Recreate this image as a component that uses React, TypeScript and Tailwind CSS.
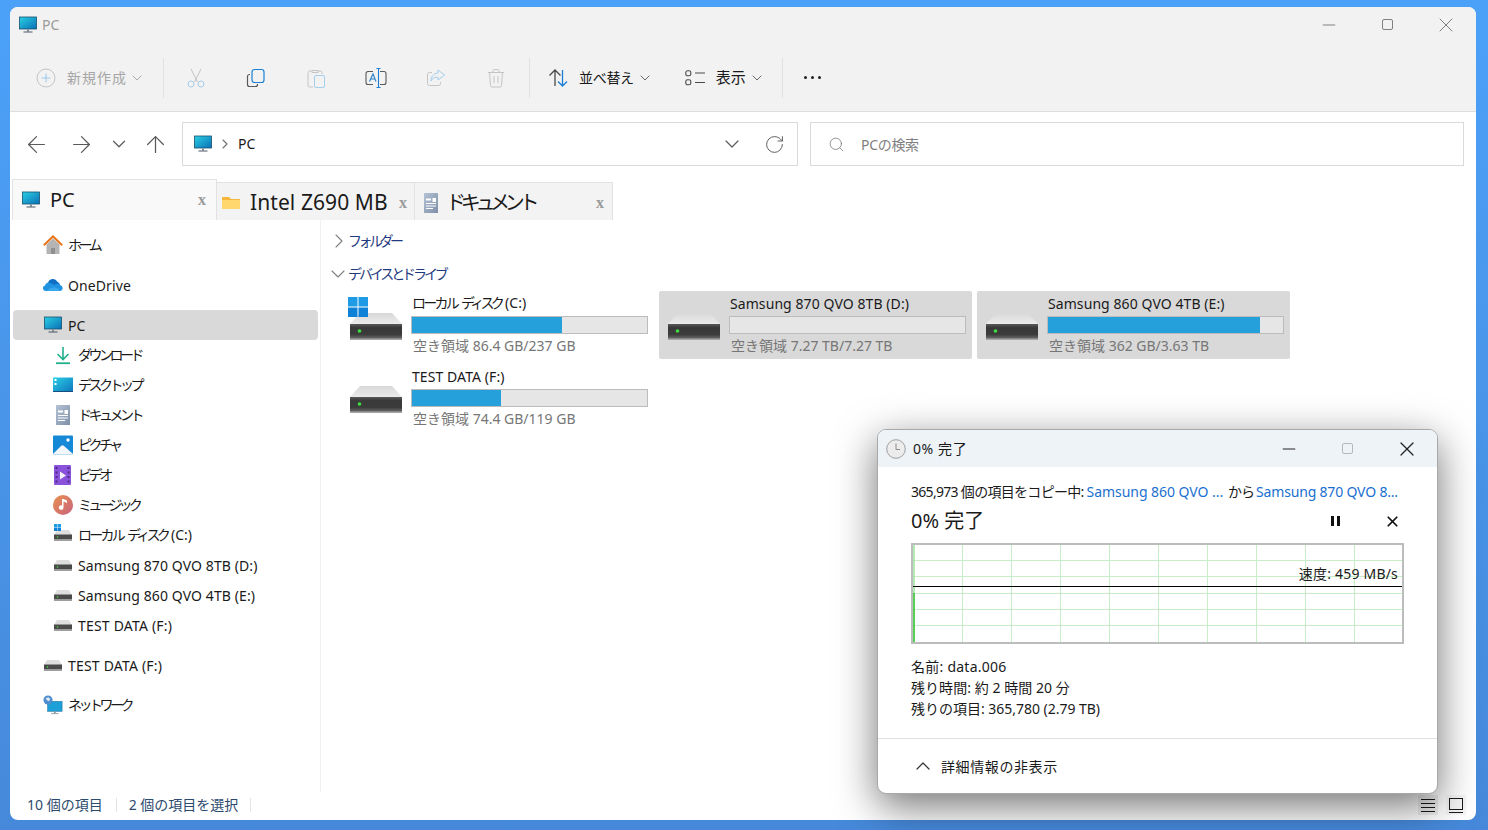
import React, { useId } from "react";
import { ArrowLeft, ArrowRight, ArrowUp, ChevronDown, ChevronRight, ChevronUp, RotateCw, Search, X, Minus } from "lucide-react";

function Monitor({ s = 20 }: { s?: number }) {
  const id = useId();
  return (
    <svg width={s} height={s} viewBox="0 0 20 20" className="shrink-0">
      <defs>
        <linearGradient id={id} x1="0" y1="0" x2="1" y2="1">
          <stop offset="0" stopColor="#2ad0e4" />
          <stop offset="1" stopColor="#0a6fb5" />
        </linearGradient>
      </defs>
      <rect x="1.5" y="2" width="17" height="12" fill={`url(#${id})`} stroke="#17506f" strokeWidth="0.8" />
      <rect x="9" y="14.5" width="2" height="2" fill="#7c8a94" />
      <rect x="5.5" y="16.5" width="9" height="1" fill="#4a5660" />
    </svg>
  );
}

function Hdd({ large = false }: { large?: boolean }) {
  const id = useId();
  const top = useId();
  if (large) {
    return (
      <svg width="52" height="27" viewBox="0 0 52 27" className="block">
        <defs>
          <linearGradient id={id} x1="0" y1="0" x2="0" y2="1">
            <stop offset="0" stopColor="#5a5a5a" />
            <stop offset="0.25" stopColor="#383838" />
            <stop offset="0.7" stopColor="#3c3c3c" />
            <stop offset="1" stopColor="#6e6e6e" />
          </linearGradient>
          <linearGradient id={top} x1="0" y1="0" x2="0" y2="1">
            <stop offset="0" stopColor="#d8d8d8" />
            <stop offset="1" stopColor="#ececec" />
          </linearGradient>
        </defs>
        <path d="M10 0h32l10 11H0z" fill={`url(#${top})`} />
        <rect x="0" y="11" width="52" height="15" fill={`url(#${id})`} />
        <rect x="0" y="25.500" width="52" height="1.500" fill="#a5a5a5" />
        <circle cx="9.500" cy="18" r="1.800" fill="#3fe03f" />
      </svg>
    );
  }
  return (
    <svg width="18" height="11" viewBox="0 0 18 11" className="block">
      <path d="M3 0h12l3 5H0z" fill="#dedede" />
      <rect y="4.5" width="18" height="6" fill="#4a4a4a" />
      <rect y="9" width="18" height="1.5" fill="#9a9a9a" />
      <circle cx="3.5" cy="7" r="0.8" fill="#3fe03f" />
    </svg>
  );
}

function WinLogo({ s = 20 }: { s?: number }) {
  return (
    <svg width={s} height={s} viewBox="0 0 20 20" className="block">
      <rect x="0" y="0" width="9.5" height="9.5" fill="#1f9be6" />
      <rect x="10.5" y="0" width="9.5" height="9.5" fill="#1f9be6" />
      <rect x="0" y="10.5" width="9.5" height="9.5" fill="#0f82d8" />
      <rect x="10.5" y="10.5" width="9.5" height="9.5" fill="#0f82d8" />
    </svg>
  );
}

function DriveSmall({ win = false }: { win?: boolean }) {
  return (
    <span className="relative block w-[18px] h-[11px]">
      <Hdd />
      {win && (
        <span className="absolute left-0 top-[-6px]">
          <WinLogo s={7} />
        </span>
      )}
    </span>
  );
}

const HomeIcon = () => (
  <svg width="20" height="20" viewBox="0 0 20 20">
    <path d="M3.5 9.5 10 3.5l6.5 6V19h-13z" fill="#b4b4b4" />
    <path d="M8 13h4v6H8z" fill="#8f8f8f" />
    <path d="M0.8 10.3 10 1.5l9.2 8.8" fill="none" stroke="#e8751a" strokeWidth="2" />
  </svg>
);
const CloudIcon = () => (
  <svg width="20" height="20" viewBox="0 0 20 20">
    <path d="M5 8a5 5 0 0 1 9.4-1.2A3.8 3.8 0 0 1 17 10H6z" fill="#0f6fc4" />
    <path d="M2.8 16A2.8 2.8 0 0 1 2 10.5 3.7 3.7 0 0 1 8 8.5a4 4 0 0 1 3.5 1.7 3 3 0 0 1 5-.1A3 3 0 0 1 17.4 16z" fill="#1f93e0" />
    <path d="M4 16c2-3 5-4 8-3.5 2 .3 4 1.500 5.500 3.500z" fill="#3aa9ec" />
  </svg>
);
const DownloadIcon = () => (
  <svg width="20" height="20" viewBox="0 0 20 20" fill="none" stroke="#22b08c" strokeWidth="1.6">
    <path d="M10 2v12M4.500 9 10 14.500 15.500 9" />
    <path d="M3 18.200h14" strokeWidth="1.800" />
  </svg>
);
const DesktopIcon = () => {
  const id = useId();
  return (
    <svg width="20" height="20" viewBox="0 0 20 20">
      <defs>
        <linearGradient id={id} x1="0" y1="0" x2="1" y2="1">
          <stop offset="0" stopColor="#2bcfe6" />
          <stop offset="1" stopColor="#0f75bd" />
        </linearGradient>
      </defs>
      <rect y="2.500" width="20" height="14.500" fill={`url(#${id})`} />
      <rect y="16" width="20" height="1" fill="#14507c" />
      <rect x="1.500" y="4" width="2" height="2" fill="#fff" />
      <rect x="1.500" y="8" width="2" height="2" fill="#fff" />
    </svg>
  );
};
const DocIcon = ({ w = 14, h = 20 }: { w?: number; h?: number }) => {
  const id = useId();
  return (
    <svg width={w} height={h} viewBox="0 0 14 20" className="block">
      <defs>
        <linearGradient id={id} x1="0" y1="0" x2="1" y2="1">
          <stop offset="0" stopColor="#b4c2d4" />
          <stop offset="1" stopColor="#7d8fa8" />
        </linearGradient>
      </defs>
      <rect width="14" height="20" rx="0.5" fill={`url(#${id})`} />
      <path d="M2 5.500h5v2H2zM8.500 5h3.500v4H8.500z" fill="#fff" />
      <path d="M2 10h10v1H2zM2 12.500h10v1H2zM2 15h7v1H2z" fill="#fff" />
    </svg>
  );
};
const PicIcon = () => (
  <svg width="20" height="20" viewBox="0 0 20 20">
    <rect y="0.500" width="20" height="19" rx="1" fill="#1689d6" />
    <circle cx="15" cy="5" r="1.700" fill="#fff" />
    <path d="M0 19l8-8c1-1 2-1 3 0l9 8v.500H0z" fill="#f2f7fb" />
  </svg>
);
const VideoIcon = () => (
  <svg width="20" height="20" viewBox="0 0 20 20">
    <rect x="1" y="0" width="17" height="20" rx="1" fill="#8a52db" />
    <path d="M7 6.500v8l6-4z" fill="#f4effc" />
    <path d="M2.500 2h2v2h-2zM2.500 6.500h2v2h-2zM2.500 11h2v2h-2zM2.500 15.500h2v2h-2zM14.500 2h2v2h-2zM14.500 6.500h2v2h-2zM14.500 11h2v2h-2zM14.500 15.500h2v2h-2z" fill="#4c2a8c" />
  </svg>
);
const MusicIcon = () => {
  const id = useId();
  return (
    <svg width="20" height="20" viewBox="0 0 20 20">
      <defs>
        <linearGradient id={id} x1="0" y1="0" x2="1" y2="1">
          <stop offset="0" stopColor="#e8914e" />
          <stop offset="1" stopColor="#c9627f" />
        </linearGradient>
      </defs>
      <circle cx="10" cy="10" r="10" fill={`url(#${id})`} />
      <path d="M10.500 4v8.500a2.300 2.300 0 1 1-1.500-2.100V4zM10.500 4l3.500 1.500V8l-3.500-1.500z" fill="#fff" />
    </svg>
  );
};
const NetIcon = () => (
  <svg width="22" height="22" viewBox="0 0 22 22">
    <rect x="5" y="7" width="16" height="11" fill="#1d9fd8" stroke="#14648f" strokeWidth="0.500" />
    <rect x="12" y="18" width="2" height="2" fill="#8d979e" />
    <rect x="9" y="20" width="8" height="1" fill="#8d979e" />
    <circle cx="5.500" cy="5.500" r="5" fill="#4f8dce" />
    <path d="M3 3.500l3-1 2 2-1.500 2.500-2.500-1.500z" fill="#dfe9f4" />
  </svg>
);

const ToolBtn = ({ children }: { children: React.ReactNode }) => (
  <div className="w-[60px] h-[24px] flex items-center justify-center">{children}</div>
);

const Sep = () => <div className="w-px h-[40px] bg-[#e2e2e2]" />;

const CName = () => (
  <span className="inline-flex gap-[4px] pb-[2px]">
    <span className="tracking-[-2.750px]">ローカル</span>
    <span className="tracking-[-3.750px]">ディスク</span>
    <span>(C:)</span>
  </span>
);

type Item = { label: React.ReactNode; key: string; tr: string; icon: React.ReactNode };
const children: Item[] = [
  { key: "dl", label: "ダウンロード", tr: "tracking-[-3.500px] pb-[2px]", icon: <DownloadIcon /> },
  { key: "dt", label: "デスクトップ", tr: "tracking-[-3.500px] pb-[2px]", icon: <DesktopIcon /> },
  { key: "doc", label: "ドキュメント", tr: "tracking-[-3.500px] pb-[2px]", icon: <DocIcon /> },
  { key: "pic", label: "ピクチャ", tr: "tracking-[-3.500px] pb-[2px]", icon: <PicIcon /> },
  { key: "vid", label: "ビデオ", tr: "tracking-[-3.400px] pb-[2px]", icon: <VideoIcon /> },
  { key: "mus", label: "ミュージック", tr: "tracking-[-3.800px] pb-[2px]", icon: <MusicIcon /> },
  { key: "c", label: <CName />, tr: "", icon: <DriveSmall win /> },
  { key: "d", label: "Samsung 870 QVO 8TB (D:)", tr: "tracking-[0.1px]", icon: <DriveSmall /> },
  { key: "e", label: "Samsung 860 QVO 4TB (E:)", tr: "tracking-[0.1px]", icon: <DriveSmall /> },
  { key: "f", label: "TEST DATA (F:)", tr: "tracking-[0.2px]", icon: <DriveSmall /> },
];

function NavRow({ icon, children: text, cls = "", selected = false, tr = "" }: { icon: React.ReactNode; children: React.ReactNode; cls?: string; selected?: boolean; tr?: string }) {
  return (
    <div className={`flex h-[30px] items-center ml-[3px] mr-[2px] rounded pl-[30px] ${selected ? "bg-[#d9d9d9]" : ""} ${cls}`}>
      <span className="w-[20px] flex justify-center items-center">{icon}</span>
      <span className={`ml-[5px] text-[14px] text-[#1a1a1a] whitespace-nowrap ${tr}`}>{text}</span>
    </div>
  );
}

function Drive({ name, free, fill, selected = false, win = false }: { name: React.ReactNode; free: string; fill: string; selected?: boolean; win?: boolean }) {
  return (
    <div className={`relative flex w-[313px] h-[68px] rounded-[2px] ${selected ? "bg-[#d9d9d9]" : ""}`}>
      <div className="w-[70px] pl-[9px] pt-[22px] shrink-0">
        <Hdd large />
      </div>
      {win && (
        <span className="absolute left-[7px] top-[6px]">
          <WinLogo />
        </span>
      )}
      <div className="w-[237px]">
        <div className="h-[25px] flex items-center pl-px text-[14px] text-[#1a1a1a] whitespace-nowrap tracking-[0.08px]">{name}</div>
        <div className="h-[18px] border border-[#bcbcbc] bg-[#e6e6e6]">
          <div className={`h-full bg-[#26a0da] ${fill}`} />
        </div>
        <div className="h-[23px] flex items-center pl-[2px] text-[14px] text-[#767676] whitespace-nowrap">{free}</div>
      </div>
    </div>
  );
}

function Graph() {
  const vs = [50, 99, 148, 197, 246, 295, 344, 393, 442];
  const hs = [15, 31, 48, 64, 80];
  return (
    <svg width="489" height="97" viewBox="0 0 489 97" className="block">
      {vs.map((x) => (
        <line key={x} x1={x - 0.5} x2={x - 0.5} y1="0" y2="97" stroke="#c8eec8" />
      ))}
      {hs.map((y) => (
        <line key={y} x1="0" x2="489" y1={y + 0.5} y2={y + 0.5} stroke="#c8eec8" />
      ))}
      <line x1="1" x2="1" y1="0" y2="48" stroke="#9be39b" strokeWidth="1.500" />
      <line x1="1" x2="1" y1="48" y2="97" stroke="#1fc01f" strokeWidth="1.500" />
      <line x1="0" x2="489" y1="41.500" y2="41.500" stroke="#000" />
    </svg>
  );
}

export default function App() {
  return (
    <div className="h-[830px] w-[1488px] overflow-hidden bg-gradient-to-b from-[#4ba1f8] to-[#4689da] pt-[7px] pl-[10px] font-['Noto_Sans','Noto_Sans_CJK_JP',sans-serif]">
      <div className="relative w-[1466px] h-[813px] rounded-lg bg-white flex flex-col">
        {/* title bar */}
        <div className="h-[35px] bg-[#f2f2f2] rounded-t-lg flex items-center pl-[8px] shrink-0">
          <Monitor />
          <span className="ml-[4px] text-[14px] text-[#9a9a9a]">PC</span>
          <div className="ml-auto flex items-center text-[#808080]">
            <span className="w-[58px] flex justify-center"><Minus size={20} strokeWidth={1.200} /></span>
            <span className="w-[58px] flex justify-center"><span className="block w-[11px] h-[11px] rounded-[2px] border border-[#808080]" /></span>
            <span className="w-[60px] pr-[1px] flex justify-center"><X size={24} strokeWidth={1} /></span>
          </div>
        </div>
        {/* toolbar */}
        <div className="h-[70px] pt-[2px] bg-[#f2f2f2] border-b border-[#dedede] flex items-center shrink-0">
          <div className="w-[153px] flex items-center pl-[26px] text-[#a6a6a6]">
            <svg width="20" height="20" viewBox="0 0 20 20" fill="none">
              <circle cx="10" cy="10" r="9" stroke="#c4c4c4" strokeWidth="1" />
              <path d="M10 5.500v9M5.500 10h9" stroke="#9cc8ee" strokeWidth="1" />
            </svg>
            <span className="ml-[11px] text-[14px] whitespace-nowrap tracking-[1px]">新規作成</span>
            <ChevronDown size={16} className="ml-[2px]" strokeWidth={1.400} />
          </div>
          <Sep />
          <div className="flex ml-[2px]">
            <ToolBtn>
              <svg width="20" height="20" viewBox="0 0 20 20" fill="none" strokeWidth="1">
                <path d="M5 1l6.500 13M15 1 8.500 14" stroke="#c2c2c2" />
                <circle cx="5" cy="16" r="3" stroke="#a5cdec" />
                <circle cx="15" cy="16" r="3" stroke="#a5cdec" />
              </svg>
            </ToolBtn>
            <ToolBtn>
              <svg width="20" height="20" viewBox="0 0 20 20" fill="none" strokeWidth="1.200">
                <path d="M4 6.500h-.500A2 2 0 0 0 1.500 8.500v8a2 2 0 0 0 2 2h6a2 2 0 0 0 2-2V16" stroke="#5a5a5a" />
                <rect x="6" y="1.500" width="12" height="13" rx="2.500" stroke="#1a7fd4" />
              </svg>
            </ToolBtn>
            <ToolBtn>
              <svg width="20" height="20" viewBox="0 0 20 20" fill="none" strokeWidth="1">
                <path d="M6 3H3.500a1.500 1.500 0 0 0-1.500 1.500v13A1.500 1.500 0 0 0 3.500 19H7" stroke="#c4c4c4" />
                <path d="M12 3h2.500A1.500 1.500 0 0 1 16 4.500V6M6 2.500h6v2H6z" stroke="#c4c4c4" />
                <rect x="8.500" y="7.500" width="10" height="12" rx="1.500" stroke="#a5cdec" />
              </svg>
            </ToolBtn>
            <ToolBtn>
              <svg width="22" height="22" viewBox="0 0 22 22" fill="none" strokeWidth="1.100">
                <path d="M8 4.500H3a2 2 0 0 0-2 2v9a2 2 0 0 0 2 2h5M15 4.500h4a2 2 0 0 1 2 2v9a2 2 0 0 1-2 2h-4" stroke="#5a5a5a" />
                <path d="M4.500 14.500 8 7l3 7.500M5.800 12h4.500" stroke="#2a80c8" />
                <path d="M11.500 1.500h4M13.500 1.500v19M11.500 20.500h4" stroke="#1a7fd4" />
              </svg>
            </ToolBtn>
            <ToolBtn>
              <svg width="20" height="20" viewBox="0 0 20 20" fill="none" strokeWidth="1">
                <path d="M6 4.500H3.500a2 2 0 0 0-2 2v9a2 2 0 0 0 2 2h9a2 2 0 0 0 2-2V14" stroke="#c4c4c4" />
                <path d="M12 2l6.500 5-6.500 5V9.200C9 9 6.500 10 5 13c0-4 2.500-7.500 7-8z" stroke="#a5cdec" />
              </svg>
            </ToolBtn>
            <ToolBtn>
              <svg width="20" height="20" viewBox="0 0 20 20" fill="none" stroke="#c4c4c4" strokeWidth="1">
                <path d="M2 4.500h16M7 4.500V3a1.500 1.500 0 0 1 1.500-1.500h3A1.500 1.500 0 0 1 13 3v1.500M3.500 4.500l1 13a1.500 1.500 0 0 0 1.500 1.500h8a1.500 1.500 0 0 0 1.500-1.500l1-13" />
                <path d="M8 8v7M12 8v7" />
              </svg>
            </ToolBtn>
          </div>
          <div className="ml-[3px]"><Sep /></div>
          <div className="ml-[18px] flex items-center text-[#1a1a1a]">
            <svg width="22" height="20" viewBox="0 0 22 20" fill="none" strokeWidth="1.300">
              <path d="M7 18V2M1.500 7.500 7 2l5.500 5.500" stroke="#4a4a4a" />
              <path d="M14.500 2v16M10 13.500l4.500 4.500 4.500-4.500" stroke="#1a7fd4" />
            </svg>
            <span className="ml-[9px] text-[14px] tracking-[-0.3px] whitespace-nowrap">並べ替え</span>
            <ChevronDown size={16} className="ml-[3px] text-[#606060]" strokeWidth={1.400} />
          </div>
          <div className="ml-[32px] flex items-center text-[#1a1a1a]">
            <svg width="20" height="16" viewBox="0 0 20 16" fill="none" stroke="#4a4a4a" strokeWidth="1.100">
              <rect x="0.800" y="0.800" width="5" height="5" rx="1.800" />
              <rect x="0.800" y="9.800" width="5" height="5" rx="1.800" />
              <path d="M10 3h10M10 12.500h10" />
            </svg>
            <span className="ml-[11px] text-[15px] whitespace-nowrap">表示</span>
            <ChevronDown size={16} className="ml-[3px] text-[#606060]" strokeWidth={1.400} />
          </div>
          <div className="ml-[17px]"><Sep /></div>
          <div className="ml-[21px] flex gap-[3.500px]">
            <span className="block w-[3.500px] h-[3.500px] rounded-full bg-[#222]" />
            <span className="block w-[3.500px] h-[3.500px] rounded-full bg-[#222]" />
            <span className="block w-[3.500px] h-[3.500px] rounded-full bg-[#222]" />
          </div>
        </div>
        {/* address row */}
        <div className="h-[68px] pb-[4px] flex items-center shrink-0">
          <div className="w-[172px] flex items-center text-[#5a5a5a]">
            <ArrowLeft size={27} strokeWidth={1.100} className="ml-[13px]" />
            <ArrowRight size={27} strokeWidth={1.100} className="ml-[18px]" />
            <ChevronDown size={22} strokeWidth={1.300} className="ml-[13px]" />
            <ArrowUp size={27} strokeWidth={1.100} className="ml-[12px]" />
          </div>
          <div className="w-[616px] h-[44px] border border-[#d9d9d9] flex items-center pl-[10px] pr-[12px]">
            <Monitor />
            <ChevronRight size={16} className="ml-[4px] text-[#707070]" strokeWidth={1.600} />
            <span className="ml-[5px] pb-[2px] text-[14px] text-[#1a1a1a]">PC</span>
            <ChevronDown size={24} strokeWidth={1.200} className="ml-auto text-[#5a5a5a]" />
            <RotateCw size={21} strokeWidth={1.100} className="ml-[20px] text-[#5a5a5a]" />
          </div>
          <div className="ml-[12px] w-[654px] h-[44px] border border-[#d9d9d9] flex items-center pl-[17px]">
            <Search size={17} strokeWidth={1} className="text-[#6a6a6a]" />
            <span className="ml-[16px] text-[14px] text-[#808080] tracking-[-0.3px]">PCの検索</span>
          </div>
        </div>
        {/* tabs */}
        <div className="h-[40px] flex items-end pl-[2px] shrink-0">
          <div className="w-[205px] h-[41px] bg-[#f9f9f9] border border-b-0 border-[#e2e2e2] flex items-center pl-[8px] pr-[10px]">
            <Monitor />
            <span className="ml-[9px] text-[20px] text-[#1a1a1a]">PC</span>
            <span className="ml-auto font-['Liberation_Serif',serif] font-bold text-[16px] text-[#9a9a9a]">x</span>
          </div>
          <div className="w-[198px] h-[38px] pt-[2px] bg-[#f3f3f3] border-t border-r border-[#e2e2e2] flex items-center pl-[4px] pr-[7px]">
            <svg width="20" height="20" viewBox="0 0 20 20">
              <path d="M1 4h7l2 2H19v10H1z" fill="#f6b73c" />
              <path d="M1 7h18v9H1z" fill="#ffd76e" />
            </svg>
            <span className="ml-[9px] text-[21px] text-[#1a1a1a] whitespace-nowrap tracking-[0.08px]">Intel Z690 MB</span>
            <span className="ml-auto font-['Liberation_Serif',serif] font-bold text-[16px] text-[#9a9a9a]">x</span>
          </div>
          <div className="w-[198px] h-[38px] pt-[2px] bg-[#f3f3f3] border-t border-r border-[#e2e2e2] flex items-center pl-[9px] pr-[8px]">
            <DocIcon />
            <span className="ml-[8px] text-[20px] text-[#1a1a1a] tracking-[-5.300px] whitespace-nowrap">ドキュメント</span>
            <span className="ml-auto font-['Liberation_Serif',serif] font-bold text-[16px] text-[#9a9a9a]">x</span>
          </div>
        </div>
        {/* main */}
        <div className="flex h-[572px] shrink-0">
          <div className="w-[311px] border-r border-[#f0f0f0] pt-[10px] shrink-0">
            <NavRow icon={<HomeIcon />} tr="tracking-[-3.400px] pb-[2px]">ホーム</NavRow>
            <NavRow icon={<CloudIcon />} cls="mt-[10px]" tr="tracking-[0.1px]">OneDrive</NavRow>
            <NavRow icon={<Monitor />} cls="mt-[10px]" selected>PC</NavRow>
            {children.map((c) => (
              <div key={c.key} className="flex h-[30px] items-center pl-[43px]">
                <span className="w-[20px] flex justify-center items-center">{c.icon}</span>
                <span className={`ml-[5px] text-[14px] text-[#1a1a1a] whitespace-nowrap ${c.tr}`}>{c.label}</span>
              </div>
            ))}
            <NavRow icon={<DriveSmall />} cls="mt-[10px]" tr="tracking-[0.2px]">TEST DATA (F:)</NavRow>
            <NavRow icon={<NetIcon />} cls="mt-[10px]" tr="tracking-[-3.500px] pb-[2px]">ネットワーク</NavRow>
          </div>
          <div className="flex-1 pt-[10px]">
            <div className="h-[22px] flex items-center pl-[6px] text-[14px] text-[#1f3a80]">
              <ChevronRight size={24} strokeWidth={1.100} className="text-[#808080]" />
              <span className="ml-[-3px] pb-[2px] tracking-[-3.500px]">フォルダー</span>
            </div>
            <div className="mt-[11px] h-[22px] flex items-center pl-[5px] text-[14px] text-[#1f3a80]">
              <ChevronDown size={24} strokeWidth={1.100} className="text-[#808080]" />
              <span className="ml-[-2px] pb-[2px] tracking-[-3.100px]">デバイスとドライブ</span>
            </div>
            <div className="mt-[6px] ml-[20px] grid grid-cols-[repeat(3,313px)] gap-[5px]">
              <Drive name={<CName />} free="空き領域 86.4 GB/237 GB" fill="w-[150px]" win />
              <Drive name="Samsung 870 QVO 8TB (D:)" free="空き領域 7.27 TB/7.27 TB" fill="w-0" selected />
              <Drive name="Samsung 860 QVO 4TB (E:)" free="空き領域 362 GB/3.63 TB" fill="w-[212px]" selected />
              <Drive name="TEST DATA (F:)" free="空き領域 74.4 GB/119 GB" fill="w-[89px]" />
            </div>
          </div>
        </div>
        {/* status bar */}
        <div className="h-[28px] pb-[3px] flex items-center pl-[17px] pr-[10px] text-[14px] text-[#2c4a6e]">
          <span className="whitespace-nowrap">10 個の項目</span>
          <span className="ml-[13px] w-px h-[14px] bg-[#e4e4e4]" />
          <span className="ml-[12px] whitespace-nowrap">2 個の項目を選択</span>
          <span className="ml-[12px] w-px h-[14px] bg-[#e4e4e4]" />
          <div className="ml-auto flex items-center gap-[8px]">
            <span className="block w-[20px] h-[20px] bg-[#f0f0f0] flex items-center justify-center">
              <svg width="18" height="18" viewBox="0 0 18 18" stroke="#1a1a1a" strokeWidth="1">
                <path d="M2 3.500h14M2 7.500h14M2 11.500h14M2 15.500h14" />
              </svg>
            </span>
            <span className="block w-[20px] h-[20px] bg-[#f6f6f6] flex items-center justify-center">
              <svg width="18" height="18" viewBox="0 0 18 18" fill="none" stroke="#1a1a1a" strokeWidth="1">
                <rect x="2.500" y="2.500" width="13" height="11" />
                <path d="M2 16.500h14" />
              </svg>
            </span>
          </div>
        </div>

        {/* copy dialog */}
        <div className="absolute left-[867px] top-[422px] w-[561px] h-[365px] bg-white rounded-[9px] border border-[#a8a8a8] shadow-[0_12px_40px_rgba(0,0,0,0.55)] overflow-hidden flex flex-col">
          <div className="h-[37px] bg-[#eef3f8] flex items-center pl-[8px] shrink-0">
            <svg width="20" height="20" viewBox="0 0 20 20" fill="none">
              <circle cx="10" cy="10" r="9.300" fill="#ececec" stroke="#8a8a8a" strokeWidth="0.800" />
              <path d="M10 4.500V10.500H14" stroke="#8a8a8a" strokeWidth="1" />
            </svg>
            <span className="ml-[7px] text-[14px] text-[#1a1a1a] tracking-[0.6px]">0% 完了</span>
            <div className="ml-auto flex items-center">
              <Minus size={20} strokeWidth={1.300} className="text-[#222] mr-[43px]" />
              <span className="block w-[11px] h-[11px] rounded-[2px] border border-[#b8b8b8] mr-[42px]" />
              <X size={24} strokeWidth={1.200} className="text-[#222] mr-[18px]" />
            </div>
          </div>
          <div className="pl-[33px] pr-[34px] pt-[14px]">
            <div className="h-[20px] flex items-center text-[14px] whitespace-nowrap text-[#1a1a1a]">
              <span className="tracking-[-0.7px]">365,973 個の項目をコピー中:</span>
              <span className="ml-[3px] text-[#1a6fd0] tracking-[-0.05px]">Samsung 860 QVO ...</span>
              <span className="ml-[5px] tracking-[-1px]">から</span>
              <span className="ml-[2px] text-[#1a6fd0] tracking-[-0.18px]">Samsung 870 QVO 8...</span>
            </div>
            <div className="mt-[5px] h-[30px] flex items-center">
              <span className="text-[20px] text-[#1a1a1a]">0% 完了</span>
              <span className="ml-auto mr-[44px] flex gap-[3.500px]">
                <span className="block w-[3px] h-[10px] bg-[#111]" />
                <span className="block w-[3px] h-[10px] bg-[#111]" />
              </span>
              <X size={17} strokeWidth={2.400} className="mr-[2px] text-[#111]" />
            </div>
            <div className="relative mt-[7px] w-[493px] h-[101px] border-2 border-[#bcbcbc]">
              <Graph />
              <span className="absolute right-[4px] top-[18px] text-[14px] text-[#1a1a1a] whitespace-nowrap tracking-[0.2px]">速度: 459 MB/s</span>
            </div>
            <div className="mt-[12px] text-[14px] leading-[21px] text-[#1a1a1a]">
              <div className="tracking-[0.25px]">名前: data.006</div>
              <div className="tracking-[0.05px]">残り時間: 約 2 時間 20 分</div>
              <div className="tracking-[-0.02px]">残りの項目: 365,780 (2.79 TB)</div>
            </div>
          </div>
          <div className="mt-[19px] border-t border-[#e0e0e0] flex-1 flex items-center pl-[33px]">
            <ChevronUp size={24} strokeWidth={1.200} className="text-[#333]" />
            <span className="ml-[6px] text-[14px] text-[#1a1a1a] tracking-[0.6px]">詳細情報の非表示</span>
          </div>
        </div>
      </div>
    </div>
  );
}
